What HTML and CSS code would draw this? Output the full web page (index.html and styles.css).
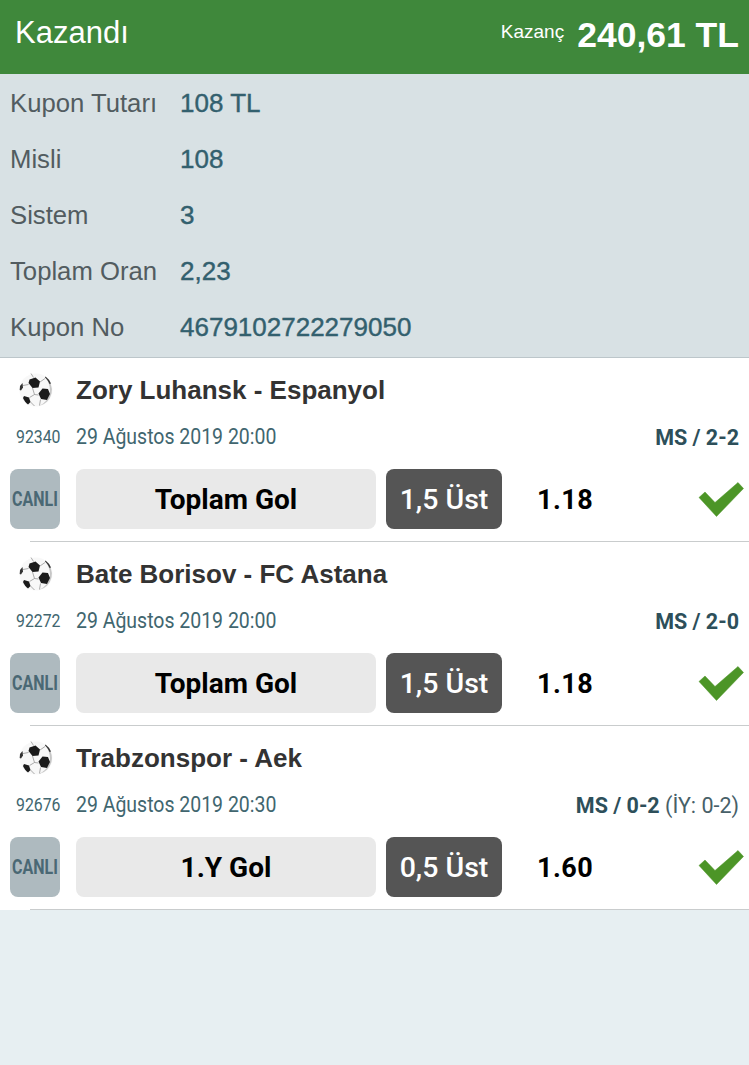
FILE: index.html
```html
<!DOCTYPE html>
<html lang="en">
<head>
    <meta charset="UTF-8">
    <title>Kupon</title>
    <link rel="stylesheet" href="styles.css">
</head>
<body>
    <header class="top">
        <div class="top-title">Kazandı</div>
        <div class="top-win">
            <span class="win-label">Kazanç</span>
            <span class="win-value">240,61 TL</span>
        </div>
    </header>

    <section class="summary">
        <div class="sum-row"><span class="sum-key">Kupon Tutarı</span><span class="sum-val">108 TL</span></div>
        <div class="sum-row"><span class="sum-key">Misli</span><span class="sum-val">108</span></div>
        <div class="sum-row"><span class="sum-key">Sistem</span><span class="sum-val">3</span></div>
        <div class="sum-row"><span class="sum-key">Toplam Oran</span><span class="sum-val">2,23</span></div>
        <div class="sum-row"><span class="sum-key">Kupon No</span><span class="sum-val">4679102722279050</span></div>
    </section>

    <section class="matches">
        <div class="match">
            <div class="match-head">
                <svg class="ball" viewBox="0 0 36 36"><use href="#ball"></use></svg>
                <span class="match-name">Zory Luhansk - Espanyol</span>
            </div>
            <div class="match-meta">
                <span class="code">92340</span>
                <span class="date">29 Ağustos 2019 20:00</span>
                <span class="score"><b>MS / 2-2</b></span>
            </div>
            <div class="match-bet">
                <div class="live"><span>CANLI</span></div>
                <div class="market">Toplam Gol</div>
                <div class="pick">1,5 Üst</div>
                <div class="odd">1.18</div>
                <svg class="check" viewBox="0 0 48 38"><use href="#check"></use></svg>
            </div>
        </div>
        <div class="match">
            <div class="match-head">
                <svg class="ball" viewBox="0 0 36 36"><use href="#ball"></use></svg>
                <span class="match-name">Bate Borisov - FC Astana</span>
            </div>
            <div class="match-meta">
                <span class="code">92272</span>
                <span class="date">29 Ağustos 2019 20:00</span>
                <span class="score"><b>MS / 2-0</b></span>
            </div>
            <div class="match-bet">
                <div class="live"><span>CANLI</span></div>
                <div class="market">Toplam Gol</div>
                <div class="pick">1,5 Üst</div>
                <div class="odd">1.18</div>
                <svg class="check" viewBox="0 0 48 38"><use href="#check"></use></svg>
            </div>
        </div>
        <div class="match">
            <div class="match-head">
                <svg class="ball" viewBox="0 0 36 36"><use href="#ball"></use></svg>
                <span class="match-name">Trabzonspor - Aek</span>
            </div>
            <div class="match-meta">
                <span class="code">92676</span>
                <span class="date">29 Ağustos 2019 20:30</span>
                <span class="score"><b>MS / 0-2</b> (İY: 0-2)</span>
            </div>
            <div class="match-bet">
                <div class="live"><span>CANLI</span></div>
                <div class="market">1.Y Gol</div>
                <div class="pick">0,5 Üst</div>
                <div class="odd">1.60</div>
                <svg class="check" viewBox="0 0 48 38"><use href="#check"></use></svg>
            </div>
        </div>
    </section>

    <!-- shared icons -->
    <svg class="defs" width="0" height="0">
        <defs>
            <g id="ball">
                <circle cx="18" cy="18" r="16.500" fill="#f8f8f8"></circle>
                <path d="M27 4.500a16.500 16.500 0 0 1-6 29.500c6-3 11-8 11-15 0-6-2-10-5-14.500z" fill="#c6c6c6"></path>
                <path d="M27.500 4.500a16.500 16.500 0 0 1 5.500 7l-1.500.5c-1-2.500-2.500-4.500-4.500-6.500z" fill="#333"></path>
                <path d="M11.500 7.500l6-2 4.500 4-1.500 6-6 .5-4-5z" fill="#1b1b1b"></path>
                <path d="M24.500 16.500l5.500.5 2 5-3 6-6-1-2.500-5.500z" fill="#1b1b1b"></path>
                <path d="M6 24l5 1.500 1.500 4.500-2.500 2.500c-2-1.500-4-4-5-6.500z" fill="#1b1b1b"></path>
                <path d="M2 14l2.500-3 .5 4.500-2 3-1.300-.5z" fill="#333"></path>
                <path d="M13 1.500l2.500 4M22 10l5-3.500M10.500 12.500l-5.500 1M14.500 16l2 6.500 4 .500M16.500 22.500l-5 3M22.500 27.500l-1 6M12.500 30l4 4" fill="none" stroke="#8a8a8a" stroke-width="0.7"></path>
            </g>
            <polygon id="check" points="2,17.500 8,12 18,22.500 41,2.500 46.500,8.500 19.500,36.500" fill="#4c9527" stroke="#4c9527" stroke-width="0.500" stroke-linejoin="round"></polygon>
        </defs>
    </svg>
</body>
</html>
```

FILE: styles.css
```css
*{
    box-sizing: border-box;
    margin: 0;
}
html,body{
    height: 100%;
}
body{
    background: #e7eff2;
    font-family: Roboto, sans-serif;
}
.top{
    height: 74px;
    background: #3f883b;
    color: #fff;
    display: flex;
    align-items: center;
    justify-content: space-between;
    padding: 0 10px 8px 15px;
    font-family: "Liberation Sans", sans-serif;
}
.top-title{
    font-size: 31px;
}
.top-win{
    display: flex;
    align-items: center;
    gap: 13px;
    margin-top: 4px;
}
.win-label{
    font-size: 19px;
    margin-bottom: 6px;
}
.win-value{
    font-size: 35.500px;
    font-weight: bold;
}
.summary{
    height: 284px;
    background: #d8e1e4;
    border-bottom: 1px solid #bcc6ca;
    padding: 1px 0 0 10px;
    font-family: "Liberation Sans", sans-serif;
    font-size: 25.700px;
}
.sum-row{
    height: 56px;
    display: flex;
    align-items: center;
}
.sum-key{
    width: 170px;
    color: #525c60;
}
.sum-val{
    color: #33606e;
    font-size: 26px;
    -webkit-text-stroke: 0.4px #33606e;
}
.matches{
    background: #fff;
}
.match{
    height: 184px;
    padding: 0 0 0 10px;
    position: relative;
}
.match::after{
    content: "";
    position: absolute;
    left: 30px;
    right: 0;
    bottom: 0;
    height: 1px;
    background: #c9cccd;
}
.match-head{
    height: 62px;
    padding-top: 2px;
    display: flex;
    align-items: center;
}
.ball{
    width: 36px;
    height: 36px;
    margin: 0 22px 0 8px;
}
.match-name{
    font-family: "Liberation Sans", sans-serif;
    font-weight: bold;
    font-size: 26px;
    color: #333;
}
.match-meta{
    height: 33px;
    display: flex;
    align-items: center;
    color: #41666f;
}
/* the date and code text is narrower than plain Roboto */
.code{
    width: 60px;
    margin-left: 6px;
    font-size: 18px;
    transform: scaleX(0.88);
    transform-origin: left center;
}
.date{
    font-size: 22px;
    white-space: nowrap;
    transform: scaleX(0.885);
    transform-origin: left center;
}
.score{
    margin-left: auto;
    padding: 2px 10px 0 0;
    font-size: 21.500px;
    color: #476068;
}
.score b{
    color: #2d4f5a;
}
.match-bet{
    margin-top: 16px;
    height: 60px;
    padding-right: 4px;
    display: flex;
    align-items: center;
}
.live{
    width: 50px;
    height: 60px;
    border-radius: 8px;
    background: #aebabf;
    color: #4a6874;
    font-size: 19.500px;
    font-weight: bold;
    display: flex;
    align-items: center;
    justify-content: center;
}
.live span{
    transform: scaleX(0.82);
}
.market{
    width: 300px;
    height: 60px;
    margin-left: 16px;
    padding-top: 1px;
    border-radius: 8px;
    background: #e9e9e9;
    color: #000;
    font-size: 28px;
    font-weight: bold;
    display: flex;
    align-items: center;
    justify-content: center;
}
.pick{
    width: 116px;
    height: 60px;
    margin-left: 10px;
    border-radius: 8px;
    background: #555;
    color: #fff;
    font-size: 28.500px;
    font-weight: 500;
    display: flex;
    align-items: center;
    justify-content: center;
}
.odd{
    margin-left: 35px;
    padding-top: 2px;
    color: #000;
    font-size: 27px;
    font-weight: bold;
    letter-spacing: 0.5px;
}
.check{
    width: 48px;
    height: 38px;
    margin-left: auto;
}
.defs{
    position: absolute;
}
```
